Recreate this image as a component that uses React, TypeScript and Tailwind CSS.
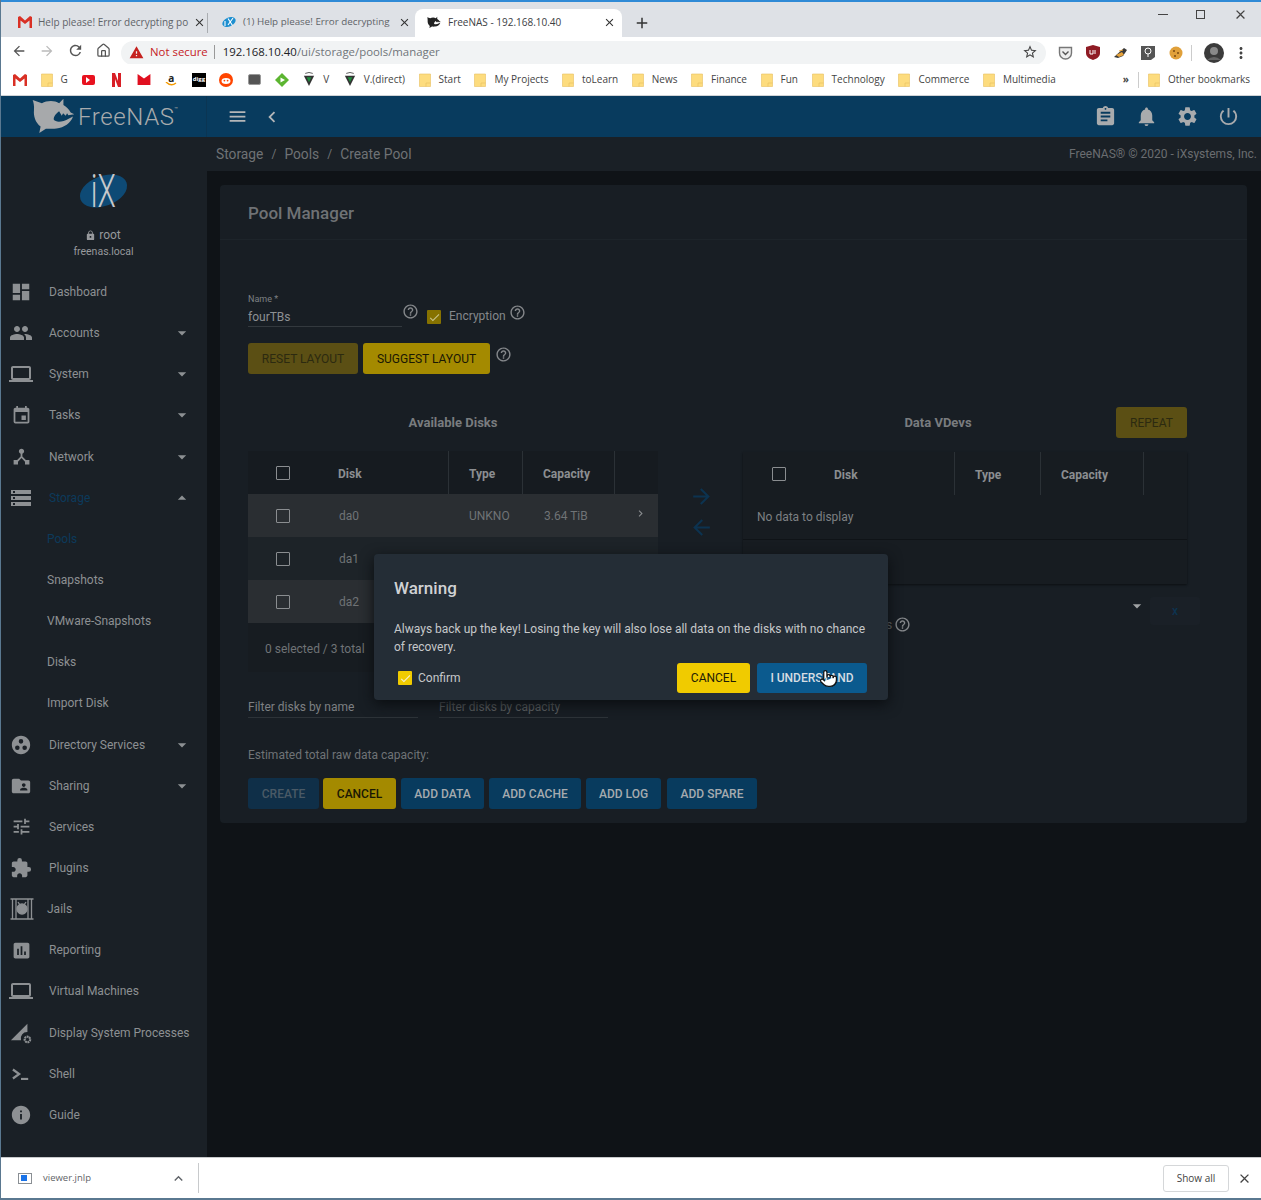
import React from "react";
import {
  MdDashboard, MdPeople, MdLaptop, MdEvent, MdDeviceHub, MdStorage, MdGroupWork, MdFolderShared, MdTune,
  MdExtension, MdAssessment, MdInfo, MdArrowDropDown, MdArrowDropUp, MdAssignment, MdNotifications, MdSettings,
  MdPowerSettingsNew, MdMenu, MdChevronLeft, MdChevronRight, MdHelpOutline, MdLock, MdCheck, MdArrowForward, MdArrowBack,
  MdClose, MdRefresh, MdStarBorder, MdMoreVert, MdExpandLess, MdWarning, MdAdd,
} from "react-icons/md";
import { Pointer, House } from "lucide-react";

const Shark = ({ className }: { className: string }) => (
  <svg viewBox="18 7 130 107" className={className} fill="currentColor">
    <path d="M20 12 L48 22 C62 14 85 12 100 22 L113 8 L113 27 C122 32 130 40 135 50 L146 55 L128 58 L124 52 L120 60 L112 52 L108 60 L100 46 C92 52 82 62 84 72 C90 80 110 80 130 68 L142 62 C135 82 115 96 92 98 C80 100 70 98 60 99 L40 112 L44 92 C28 80 22 60 24 42 C25 30 23 20 20 12 Z" />
  </svg>
);

const Gmail = ({ color = "#d93025" }: { color?: string }) => (
  <svg viewBox="0 0 14 12" className="w-[14px] h-[12px] shrink-0">
    <path d="M0 1 L2 0 L7 4.5 L12 0 L14 1 V12 H11.5 V4.5 L7 8 L2.5 4.5 V12 H0 Z" fill={color} />
  </svg>
);

const RedMail = () => (
  <svg viewBox="0 0 14 12" className="w-[14px] h-[11px] shrink-0">
    <path d="M0 0 L7 5 L14 0 V12 H0 Z" fill="#e01020" />
  </svg>
);

const Folder = () => (
  <svg viewBox="0 0 12 14" className="w-[12px] h-[14px] shrink-0">
    <path d="M0.5 1 H11.5 V13.5 H0.5 Z" fill="#fddc7e" stroke="#e8c060" strokeWidth="0.6" />
    <path d="M7 13.5 V10 H11.5" fill="none" stroke="#e8c060" strokeWidth="0.6" />
  </svg>
);

const Bm = ({ children }: { children: React.ReactNode }) => (
  <div className="w-[14px] h-[14px] flex items-center justify-center shrink-0">{children}</div>
);

const VIcon = () => (
  <svg viewBox="0 0 14 16" className="w-[14px] h-[15px]">
    <path d="M3 1.5 Q7 -0.5 11 1.5" stroke="#555" strokeWidth="1" fill="none" />
    <path d="M1.5 4 H12.5 L7 15 Z" fill="#333" />
    <path d="M4.5 5.5 H9.5 L7 11 Z" fill="#1e8e3e" />
  </svg>
);

const FolderMark = ({ label }: { label: string }) => (
  <div className="flex items-center gap-2 shrink-0">
    <Folder />
    <span className="whitespace-nowrap">{label}</span>
  </div>
);

const JailIcon = () => (
  <svg viewBox="0 0 24 24" className="w-[24px] h-[24px]" fill="none" stroke="currentColor" strokeWidth="1.3">
    <path d="M0.5 2 H23.5 M0.5 22 H23.5" strokeWidth="1.6" />
    <path d="M2.5 2 V22 M6 2 V22 M18 2 V22 M21.5 2 V22" />
    <circle cx="12" cy="12" r="5" fill="currentColor" />
    <path d="M8 5 L10 8 M16 5 L14 8" />
  </svg>
);

const ProcIcon = () => (
  <svg viewBox="0 0 24 24" className="w-[22px] h-[22px]">
    <path d="M1 20 L19 2 V11 A7 7 0 0 0 12 20 Z" fill="currentColor" />
    <circle cx="19" cy="19" r="3" fill="none" stroke="currentColor" strokeWidth="2.4" strokeDasharray="2 0.6" />
  </svg>
);

const ShellIcon = () => (
  <svg viewBox="0 0 20 20" className="w-[18px] h-[18px]" fill="none" stroke="currentColor" strokeWidth="2.4">
    <path d="M1 5 L8 10 L1 15" />
    <path d="M10 15.5 H18" />
  </svg>
);

const nav: [string, React.ReactNode, number, string?][] = [
  ["Dashboard", <MdDashboard size={22} />, 0],
  ["Accounts", <MdPeople size={24} />, 1],
  ["System", <MdLaptop size={24} />, 1],
  ["Tasks", <MdEvent size={21} />, 1],
  ["Network", <MdDeviceHub size={21} />, 1],
  ["Storage", <MdStorage size={24} />, 2, "active"],
  ["Pools", null, 0, "subactive"],
  ["Snapshots", null, 0, "sub"],
  ["VMware-Snapshots", null, 0, "sub"],
  ["Disks", null, 0, "sub"],
  ["Import Disk", null, 0, "sub"],
  ["Directory Services", <MdGroupWork size={22} />, 1],
  ["Sharing", <MdFolderShared size={22} />, 1],
  ["Services", <MdTune size={21} />, 0],
  ["Plugins", <MdExtension size={22} />, 0],
  ["Jails", <JailIcon />, 0, "jail"],
  ["Reporting", <MdAssessment size={21} />, 0],
  ["Virtual Machines", <MdLaptop size={24} />, 0],
  ["Display System Processes", <ProcIcon />, 0],
  ["Shell", <ShellIcon />, 0],
  ["Guide", <MdInfo size={22} />, 0],
];

const Check = ({ on, cls }: { on?: boolean; cls?: string }) =>
  on ? (
    <div className={`w-[14px] h-[14px] rounded-[1px] flex items-center justify-center text-[#f4f0d0] shrink-0 ${cls}`}>
      <MdCheck size={13} />
    </div>
  ) : (
    <div className="w-[14px] h-[14px] rounded-[1px] border-[1.5px] border-[#8a8d90] shrink-0" />
  );

const HeaderCells = ({ cols }: { cols: { w: string; label: string; pl: string; border: boolean }[] }) => (
  <>
    {cols.map((c) => (
      <div key={c.label} className={`${c.w} ${c.pl} ${c.border ? "border-r border-[#2b3136]" : ""} h-full pt-[3px] flex items-center font-bold text-[12px] text-[#8b8e91] shrink-0`}>
        {c.label}
      </div>
    ))}
  </>
);

const Row = ({ name, bg, type, cap }: { name: string; bg: string; type?: string; cap?: string }) => (
  <div className={`h-[43px] flex items-center ${bg} text-[12px] text-[#6f7376]`}>
    <div className="w-[70px] pl-[28px] shrink-0"><Check /></div>
    <div className="w-[130px] pl-[21px] shrink-0">{name}</div>
    <div className="w-[74px] pl-[21px] shrink-0">{type}</div>
    <div className="w-[92px] pl-[22px] shrink-0">{cap}</div>
    {type && <MdChevronRight size={13} className="ml-[20px] -mt-[4px] text-[#8a8d90]" />}
  </div>
);

const Btn = ({ w, bg, text, label, bold }: { w: string; bg: string; text: string; label: string; bold?: boolean }) => (
  <div className={`${w} ${bg} ${text} ${bold === false ? "font-normal" : "font-medium"} h-[31px] rounded-[3px] flex items-center justify-center text-[12px] shrink-0 whitespace-nowrap`}>
    {label}
  </div>
);

export default function App() {
  return (
    <div className="w-[1261px] h-[1200px] relative overflow-hidden flex flex-col bg-white font-['Roboto',sans-serif] border-l border-[#5a7890]">
      {/* Tab strip */}
      <div className="h-[37px] bg-[#dee1e6] border-t-[2px] border-[#2f8ad6] flex items-end shrink-0 font-['Open_Sans',sans-serif] text-[10px] text-[#5f6368] relative">
        <div className="w-[206px] h-[28px] pb-[2px] flex items-center pl-[17px] shrink-0">
          <Gmail />
          <span className="ml-[6px] w-[150px] whitespace-nowrap">Help please! Error decrypting po</span>
          <MdClose size={13} className="ml-[5px] text-[#333]" />
        </div>
        <div className="w-px h-[20px] mb-[4px] bg-[#a9acb0]" />
        <div className="w-[207px] h-[28px] pb-[2px] flex items-center pl-[8px] shrink-0">
          <svg viewBox="0 0 14 12" className="w-[14px] h-[12px] ml-[6px] shrink-0">
            <ellipse cx="7" cy="6" rx="7" ry="4.5" fill="#1d8fd0" transform="rotate(-25 7 6)" />
            <path d="M3 5 V10 M6 9 L11 2 M6 2.5 L10.5 9.5" stroke="#fff" strokeWidth="1.1" />
          </svg>
          <span className="ml-[7px] w-[148px] text-[9.8px] whitespace-nowrap">(1) Help please! Error decrypting</span>
          <MdClose size={13} className="ml-[7px] text-[#333]" />
        </div>
        <div className="w-[207px] h-[28px] pb-[2px] bg-white rounded-t-[8px] flex items-center pl-[11px] text-[#3c4043] shrink-0">
          <Shark className="w-[14px] h-[13px] text-[#222] shrink-0 ml-[1px]" />
          <span className="ml-[7px] w-[155px] whitespace-nowrap">FreeNAS - 192.168.10.40</span>
          <MdClose size={13} className="text-[#333]" />
        </div>
        <MdAdd size={18} className="ml-[11px] mb-[5px] text-[#333]" />
        <div className="ml-auto self-start flex items-center gap-[28px] mr-[13px] mt-[5px] text-[#444]">
          <div className="w-[10px] h-px bg-[#444]" />
          <div className="w-[9px] h-[9px] border border-[#444]" />
          <MdClose size={15} />
        </div>
      </div>

      {/* Toolbar */}
      <div className="h-[27px] bg-white flex items-center shrink-0 text-[#5f6368]">
        <div className="flex items-center gap-[12px] pl-[10px] w-[120px] shrink-0">
          <MdArrowBack size={16} className="text-[#555]" />
          <MdArrowForward size={16} className="text-[#bbb]" />
          <MdRefresh size={17} className="text-[#555]" />
          <House size={15} className="text-[#555]" />
        </div>
        <div className="w-[925px] h-[24px] mt-[4px] pb-[1px] bg-[#f1f3f4] rounded-full flex items-center pl-[8px] pr-[8px] shrink-0">
          <MdWarning size={15} className="text-[#c5221f]" />
          <span className="ml-[6px] text-[#c5221f] text-[11.4px] font-['Open_Sans',sans-serif]">Not secure</span>
          <div className="w-px h-[14px] bg-[#999] ml-[6px]" />
          <span className="ml-[8px] text-[11.4px] text-[#70757a] font-['Open_Sans',sans-serif]"><span className="text-[#202124]">192.168.10.40</span>/ui/storage/pools/manager</span>
          <MdStarBorder size={16} className="ml-auto text-[#444]" />
        </div>
        <div className="flex items-center gap-[13px] ml-[11.5px] mt-[4px]">
          <svg viewBox="0 0 15 14" className="w-[15px] h-[14px]"><path d="M1.5 1.5 H13.5 V7 A6 6 0 0 1 1.5 7 Z" fill="#eee" stroke="#777" strokeWidth="1.4" /><path d="M4.5 5.5 L7.5 8.5 L10.5 5.5" fill="none" stroke="#555" strokeWidth="1.4" /></svg>
          <svg viewBox="0 0 14 15" className="w-[14px] h-[15px]"><path d="M7 0 L14 2 V8 C14 12 10 14 7 15 C4 14 0 12 0 8 V2 Z" fill="#8f1b24" /><path d="M4 5 V9 H7 V5 M9 5 V9" stroke="#fff" strokeWidth="1" fill="none" /></svg>
          <svg viewBox="0 0 15 14" className="w-[15px] h-[14px]"><path d="M1 11 L11 2 L14 4 L10 10 L5 12 Z" fill="#3a3a3a" /><path d="M3 9 L9 6 L11 9 L6 11 Z" fill="#e8a33a" /><path d="M6 5 L10 4" stroke="#e8a33a" /></svg>
          <svg viewBox="0 0 14 15" className="w-[14px] h-[15px]"><path d="M0 1 H14 V12 L10 15 H0 Z" fill="#555" /><circle cx="7" cy="6" r="3" fill="none" stroke="#fff" /><path d="M7 9 V12" stroke="#fff" /></svg>
          <svg viewBox="0 0 14 14" className="w-[14px] h-[14px] ml-[1px]"><circle cx="7" cy="7" r="6.5" fill="#e0a03a" /><circle cx="5" cy="5" r="1" fill="#7a4a12" /><circle cx="9" cy="7" r="1" fill="#7a4a12" /><circle cx="6" cy="10" r="1" fill="#7a4a12" /></svg>
          <div className="w-px h-[16px] bg-[#ccc] -ml-[5px]" />
          <svg viewBox="0 0 20 20" className="w-[20px] h-[20px] -ml-[1px]"><circle cx="10" cy="10" r="10" fill="#3b3b3b" /><circle cx="10" cy="8" r="4" fill="#8a8a8a" /><path d="M3 17 Q10 11 17 17" fill="#666" /></svg>
          <MdMoreVert size={18} className="text-[#444] -ml-[5px]" />
        </div>
      </div>

      {/* Bookmarks */}
      <div className="h-[32px] bg-white flex items-center gap-[13.6px] pl-[12px] shrink-0 border-b border-[#d0d3d6] font-['Open_Sans',sans-serif] text-[10px] text-[#444]">
        <Bm><Gmail /></Bm>
        <FolderMark label="G" />
        <Bm><div className="w-[13px] h-[10px] bg-[#e8121f] rounded-[2px] flex items-center justify-center"><div className="w-0 h-0 border-y-[3px] border-y-transparent border-l-[4px] border-l-white" /></div></Bm>
        <Bm><svg viewBox="0 0 9 14" className="w-[9px] h-[14px]"><path d="M0 0 H3 L6 8 V0 H9 V14 H6 L3 6 V14 H0 Z" fill="#d81f26" /></svg></Bm>
        <Bm><RedMail /></Bm>
        <Bm><div className="relative w-[14px] h-[14px] flex items-start justify-center"><span className="text-[10px] leading-[11px] font-bold text-[#222]">a</span><svg viewBox="0 0 14 5" className="absolute bottom-0 left-0 w-[14px] h-[5px]"><path d="M2 0 Q7 5 12 1" stroke="#f59b00" strokeWidth="1.4" fill="none" /></svg></div></Bm>
        <Bm><div className="w-[14px] h-[14px] bg-black text-white text-[6px] font-bold flex items-center justify-center">digg</div></Bm>
        <Bm><svg viewBox="0 0 14 14" className="w-[14px] h-[14px]"><circle cx="7" cy="7" r="7" fill="#ff4500" /><ellipse cx="7" cy="8" rx="4.5" ry="3" fill="#fff" /><circle cx="5.4" cy="7.6" r="0.9" fill="#ff4500" /><circle cx="8.6" cy="7.6" r="0.9" fill="#ff4500" /></svg></Bm>
        <Bm><div className="w-[13px] h-[11px] bg-[#555] rounded-[2px] border border-[#999]" /></Bm>
        <Bm><svg viewBox="0 0 14 14" className="w-[14px] h-[14px]"><path d="M7 0 L14 7 L7 14 L0 7 Z" fill="#5cb531" /><path d="M5.5 4.5 L10 7 L5.5 9.5 Z" fill="#fff" /></svg></Bm>
        <div className="flex items-center gap-[7px] shrink-0"><Bm><VIcon /></Bm><span>V</span></div>
        <div className="flex items-center gap-[7px] shrink-0"><Bm><VIcon /></Bm><span>V.(direct)</span></div>
        <FolderMark label="Start" />
        <FolderMark label="My Projects" />
        <FolderMark label="toLearn" />
        <FolderMark label="News" />
        <FolderMark label="Finance" />
        <FolderMark label="Fun" />
        <FolderMark label="Technology" />
        <FolderMark label="Commerce" />
        <FolderMark label="Multimedia" />
        <div className="ml-auto flex items-center gap-[9px] pr-[11px] shrink-0">
          <span className="font-bold">»</span>
          <div className="w-px h-[16px] bg-[#ccc]" />
          <FolderMark label="Other bookmarks" />
        </div>
      </div>

      {/* App header */}
      <div className="h-[41px] bg-[#083b5e] flex items-center shrink-0 text-[#a9abad]">
        <div className="w-[206px] h-full flex items-center pl-[31px] shrink-0 border-r border-[#0b3553]">
          <Shark className="w-[43px] h-[36px] text-[#a7a9ab] -mt-[2px] shrink-0" />
          <span className="ml-[3px] text-[24px] font-light tracking-[0.6px] leading-none">FreeNAS</span>
          <span className="text-[6px] -mt-[16px]">™</span>
        </div>
        <MdMenu size={21} className="ml-[20px] text-[#b4b6b8]" />
        <MdChevronLeft size={22} className="ml-[13px] text-[#b4b6b8]" />
        <div className="ml-auto flex items-center gap-[18px] pr-[21px]">
          <MdAssignment size={23} />
          <MdNotifications size={23} />
          <MdSettings size={23} />
          <MdPowerSettingsNew size={23} />
        </div>
      </div>

      {/* Body */}
      <div className="flex-1 flex min-h-0 bg-[#0f1317]">
        {/* Sidebar */}
        <div className="w-[206px] bg-[#1a2026] shrink-0 text-[#8d9093] text-[12px]">
          <div className="h-[134.5px] flex flex-col items-center">
            <div className="mt-[34px] mr-[2px] w-[50px] h-[40px] relative flex items-center justify-center">
              <div className="absolute w-[49px] h-[30px] rounded-[50%] bg-[#0e4a75] -rotate-[20deg]" />
              <span className="relative text-[46px] font-light text-[#c6c8ca] leading-none scale-x-[0.65]">iX</span>
            </div>
            <div className="mt-[17px] mr-[2px] flex items-center gap-[3px] text-[#97999c] text-[12px] leading-[14px]"><MdLock size={11} /><span>root</span></div>
            <div className="mt-[3px] mr-[1px] text-[10.5px] leading-[14px] text-[#97999c]">freenas.local</div>
          </div>
          {nav.map(([label, icon, caret, kind]) => {
            const isSub = kind === "sub" || kind === "subactive";
            const colored = kind === "active" || kind === "subactive";
            return (
              <div key={label} className="h-[41.15px] flex items-center relative">
                {isSub ? (
                  <div className="w-[46px] shrink-0" />
                ) : (
                  <div className={`${kind === "jail" ? "w-[46px] pl-[6px] pr-[10px]" : "w-[48px] pl-[4px] pr-[12px]"} flex justify-center shrink-0`}>{icon}</div>
                )}
                <span className={`whitespace-nowrap ${colored ? "text-[#0c3a5b]" : ""}`}>{label}</span>
                {caret === 1 && <MdArrowDropDown size={20} className="absolute left-[171px]" />}
                {caret === 2 && <MdArrowDropUp size={20} className="absolute left-[171px]" />}
              </div>
            );
          })}
        </div>

        {/* Main */}
        <div className="flex-1 min-w-0 flex flex-col">
          <div className="h-[34px] bg-[#1a2026] flex items-center pl-[9px] pr-[4px] text-[13.8px] text-[#6f7275] shrink-0">
            <span>Storage</span><span className="mx-[8px] text-[12px]">/</span>
            <span>Pools</span><span className="mx-[8px] text-[12px]">/</span>
            <span>Create Pool</span>
            <span className="ml-auto text-[12px] text-[#6a6d70]">FreeNAS® © 2020 - iXsystems, Inc.</span>
          </div>

          <div className="ml-[13px] mr-[14px] mt-[14px] h-[638px] bg-[#181e24] rounded-[4px] flex flex-col">
            <div className="h-[55px] border-b border-[#1d242a] pl-[28px] pt-[3px] flex items-center text-[17px] font-medium text-[#6f7275] shrink-0">Pool Manager</div>
            <div className="pl-[28px] flex flex-col">
              {/* Name row */}
              <div className="mt-[53px] flex items-start h-[36px]">
                <div className="w-[154px] border-b border-[#33393e] h-[34px] shrink-0">
                  <div className="text-[9px] leading-[12px] text-[#7d8083]">Name *</div>
                  <div className="text-[12px] leading-[20px] pt-[2px] text-[#8d9093]">fourTBs</div>
                </div>
                <MdHelpOutline size={17} className="mt-[10px] text-[#85888b]" />
                <div className="ml-[9px] mt-[17px] -translate-x-[1px] w-[14px] h-[14px] bg-[#867200] rounded-[1px] flex items-center justify-center text-[#c9c48a] shrink-0"><MdCheck size={13} /></div>
                <span className="ml-[7px] mt-[14px] text-[12px] leading-[18px] text-[#85888b]">Encryption</span>
                <MdHelpOutline size={17} className="ml-[3px] mt-[11px] text-[#85888b]" />
              </div>
              {/* Layout buttons */}
              <div className="mt-[14px] flex items-start h-[31px]">
                <Btn w="w-[110px]" bg="bg-[#5b4f14]" text="text-[#2c2a10]" label="RESET LAYOUT" bold={false} />
                <Btn w="w-[127px] ml-[5px]" bg="bg-[#a48a00]" text="text-[#1a1804]" label="SUGGEST LAYOUT" bold={false} />
                <MdHelpOutline size={17} className="ml-[5px] mt-[3px] text-[#85888b]" />
              </div>

              {/* Tables row */}
              <div className="mt-[33px] flex items-start">
                <div className="w-[410px] shrink-0">
                  <div className="h-[44px] pb-[13px] flex items-center justify-center font-bold text-[13px] text-[#797c7f]">Available Disks</div>
                  <div className="bg-[#1d2328] h-[221px] overflow-hidden">
                    <div className="h-[43px] bg-[#161b20] flex items-center">
                      <div className="w-[70px] pl-[28px] shrink-0"><Check /></div>
                      <HeaderCells cols={[
                        { w: "w-[131px]", pl: "pl-[20px]", label: "Disk", border: true },
                        { w: "w-[74px]", pl: "pl-[20px]", label: "Type", border: true },
                        { w: "w-[92px]", pl: "pl-[20px]", label: "Capacity", border: true },
                      ]} />
                    </div>
                    <Row name="da0" bg="bg-[#2a2e32]" type="UNKNO" cap="3.64 TiB" />
                    <Row name="da1" bg="bg-[#1d2328]" />
                    <Row name="da2" bg="bg-[#2a2e32]" />
                    <div className="h-[49px] pt-[3px] bg-[#171c21] flex items-center pl-[17px] text-[12px] text-[#6f7376]">0 selected / 3 total</div>
                  </div>
                  <div className="mt-[23px] flex gap-[21px] text-[12px]">
                    <div className="w-[170px] h-[23px] pt-[3px] border-b border-[#2d3338] text-[#7d8083]">Filter disks by name</div>
                    <div className="w-[169px] h-[23px] pt-[3px] border-b border-[#2d3338] text-[#5f6265]">Filter disks by capacity</div>
                  </div>
                </div>

                <div className="w-[85px] shrink-0 mt-[77px] pl-[31px] flex flex-col text-[#0c3350]">
                  <MdArrowForward size={25} />
                  <MdArrowBack size={25} className="mt-[6px]" />
                </div>

                <div className="w-[444px] shrink-0">
                  <div className="h-[45px] flex items-start relative">
                    <div className="w-full pt-[6px] text-center font-bold text-[13px] text-[#797c7f] pr-[54px]">Data VDevs</div>
                    <div className="absolute right-0 top-0 w-[71px] h-[31px] bg-[#5b4f14] rounded-[3px] flex items-center justify-center text-[12px] text-[#2c2a10]">REPEAT</div>
                  </div>
                  <div className="bg-[#171c21] h-[132px] shadow-[0_1px_2px_#0c0f12]">
                    <div className="h-[43px] flex items-center">
                      <div className="w-[91px] pl-[29px] shrink-0"><Check /></div>
                      <HeaderCells cols={[
                        { w: "w-[121px]", pl: "", label: "Disk", border: true },
                        { w: "w-[86px]", pl: "pl-[20px]", label: "Type", border: true },
                        { w: "w-[103px]", pl: "pl-[20px]", label: "Capacity", border: true },
                      ]} />
                    </div>
                    <div className="h-[45px] border-b border-[#0f1317] flex items-center pl-[14px] text-[12px] text-[#7d8083]">No data to display</div>
                  </div>
                  <div className="relative h-[44px] flex items-start">
                    <MdArrowDropDown size={20} className="ml-[384px] mt-[12px] text-[#a0a3a5] shrink-0" />
                    <div className="mt-[13px] w-[50px] h-[28px] ml-[3px] shrink-0 bg-[#1a2027] rounded-[3px] flex items-center justify-center text-[12px] text-[#0d3350] font-medium">x</div>
                    <span className="absolute left-[143px] top-[32px] text-[12px] text-[#6f7376]">s</span>
                    <MdHelpOutline size={17} className="absolute left-[151px] top-[32px] text-[#85888b]" />
                  </div>
                </div>
              </div>

              <div className="mt-[28px] text-[12px] text-[#6f7376]">Estimated total raw data capacity:</div>
              <div className="mt-[14px] flex gap-[5px]">
                <Btn w="w-[71px] -mr-[1px]" bg="bg-[#0f2f48]" text="text-[#4a5a66]" label="CREATE" />
                <Btn w="w-[73px]" bg="bg-[#a48a00]" text="text-[#1a1804]" label="CANCEL" />
                <Btn w="w-[83px]" bg="bg-[#083b5e]" text="text-[#a6abaf]" label="ADD DATA" />
                <Btn w="w-[92px]" bg="bg-[#083b5e]" text="text-[#a6abaf]" label="ADD CACHE" />
                <Btn w="w-[75px]" bg="bg-[#083b5e]" text="text-[#a6abaf]" label="ADD LOG" />
                <Btn w="w-[90px] ml-[1px]" bg="bg-[#083b5e]" text="text-[#a6abaf]" label="ADD SPARE" />
              </div>
            </div>
          </div>
        </div>
      </div>

      {/* Download bar */}
      <div className="h-[43px] bg-white border-t border-[#c8cacc] border-b-2 border-b-[#5a7890] flex items-center shrink-0 text-[#5f6368] font-['Open_Sans',sans-serif] text-[9.5px]">
        <div className="ml-[17px] w-[14px] h-[11px] border border-[#8a8f94] bg-white flex items-center shrink-0"><div className="ml-[2px] w-[6px] h-[6px] bg-[#1a73e8]" /></div>
        <span className="ml-[11px]">viewer.jnlp</span>
        <MdExpandLess size={17} className="ml-[79px]" />
        <div className="ml-[11px] w-px h-[30px] bg-[#c8cacc]" />
        <div className="ml-auto w-[66px] h-[27px] border border-[#d5d7d9] rounded-[3px] flex items-center justify-center text-[#444] text-[10px]">Show all</div>
        <MdClose size={15} className="ml-[8px] mr-[9px] text-[#444]" />
      </div>

      {/* Dialog */}
      <div className="absolute left-[373px] top-[554px] w-[514px] h-[146px] bg-[#242d36] rounded-[4px] px-[20px] shadow-[0_4px_14px_#0a0d10]">
        <div className="pt-[22px] text-[17px] leading-[24px] font-medium text-[#d0d2d4]">Warning</div>
        <div className="mt-[20px] text-[12px] leading-[18px] text-[#c6c8ca]">
          Always back up the key! Losing the key will also lose all data on the disks with no chance of recovery.
        </div>
        <div className="mt-[7px] flex items-center">
          <Check on cls="bg-[#f0cb00] ml-[4px]" />
          <span className="ml-[6px] text-[12px] text-[#c6c8ca]">Confirm</span>
          <div className="ml-auto w-[73px] h-[30px] bg-[#f0cb00] rounded-[3px] flex items-center justify-center text-[12px] text-[#1f1c05]">CANCEL</div>
          <div className="ml-[7px] mr-[1px] w-[110px] h-[30px] bg-[#0b5a8e] rounded-[3px] flex items-center justify-center text-[12px] font-medium text-[#d5dde3]">I UNDERSTAND</div>
        </div>
      </div>

      {/* Pointer */}
      <Pointer size={19} className="absolute left-[818px] top-[669px] text-[#111]" fill="#fff" strokeWidth={1.6} />
    </div>
  );
}
